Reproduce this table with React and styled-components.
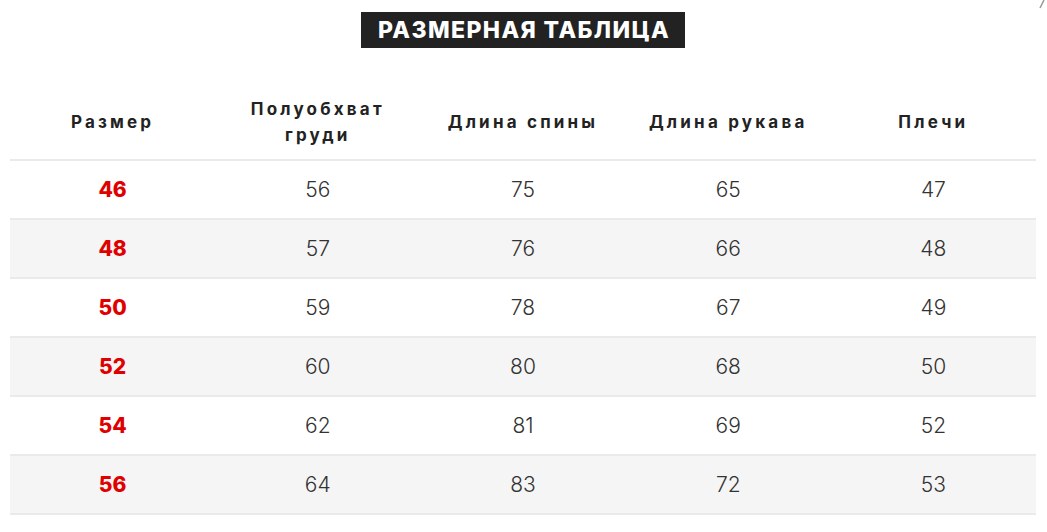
import React from "react";
import styled, { createGlobalStyle } from "styled-components";

const rows = [
  ["46", "56", "75", "65", "47"],
  ["48", "57", "76", "66", "48"],
  ["50", "59", "78", "67", "49"],
  ["52", "60", "80", "68", "50"],
  ["54", "62", "81", "69", "52"],
  ["56", "64", "83", "72", "53"],
];

const headers = ["Размер", "Полуобхват груди", "Длина спины", "Длина рукава", "Плечи"];

const GlobalStyle = createGlobalStyle`
  *, *::before, *::after {
    box-sizing: border-box;
  }
  body {
    margin: 0;
    background: #fff;
    font-family: "Inter", "Open Sans", sans-serif;
  }
`;

const Page = styled.div`
  position: relative;
  padding: 12px 11px 0 10px;
`;

const Title = styled.div`
  display: flex;
  justify-content: center;
  margin-bottom: 43px;

  h2 {
    margin: 0;
    background: #222;
    color: #fff;
    font-size: 23px;
    font-weight: 800;
    letter-spacing: 1.4px;
    line-height: 36px;
    padding: 0 15px 0 17px;
    text-transform: uppercase;
  }
`;

const Table = styled.div`
  display: grid;
  grid-template-columns: repeat(5, 1fr);
`;

const HeadCell = styled.div`
  height: 70px;
  display: flex;
  align-items: center;
  justify-content: center;
  text-align: center;
  font-size: 17px;
  font-weight: 700;
  letter-spacing: 3.2px;
  line-height: 26px;
  color: #222;
  border-bottom: 2px solid #eaeaea;
  padding: 0 20px 6px;
`;

const Cell = styled.div`
  height: 59px;
  display: flex;
  align-items: center;
  justify-content: center;
  padding-bottom: 1px;
  font-size: 21px;
  font-weight: ${(p) => (p.$size ? 800 : 300)};
  color: ${(p) => (p.$size ? "#e00000" : "#333")};
  background: ${(p) => (p.$shade ? "#f5f5f5" : "#fff")};
  border-bottom: 2px solid #eaeaea;
`;

const Corner = styled.svg`
  position: absolute;
  top: 0;
  right: 1px;
`;

export default function App() {
  return (
    <>
      <GlobalStyle />
      <Page>
        <Corner width="8" height="10" viewBox="0 0 8 10">
          <path d="M2 8 L6 0" stroke="#999" strokeWidth="1.5" />
        </Corner>
        <Title>
          <h2>Размерная таблица</h2>
        </Title>
        <Table>
          {headers.map((h) => (
            <HeadCell key={h}>{h}</HeadCell>
          ))}
          {rows.map((r, i) =>
            r.map((v, j) => (
              <Cell key={i + "-" + j} $size={j === 0} $shade={i % 2 === 1}>
                {v}
              </Cell>
            ))
          )}
        </Table>
      </Page>
    </>
  );
}
